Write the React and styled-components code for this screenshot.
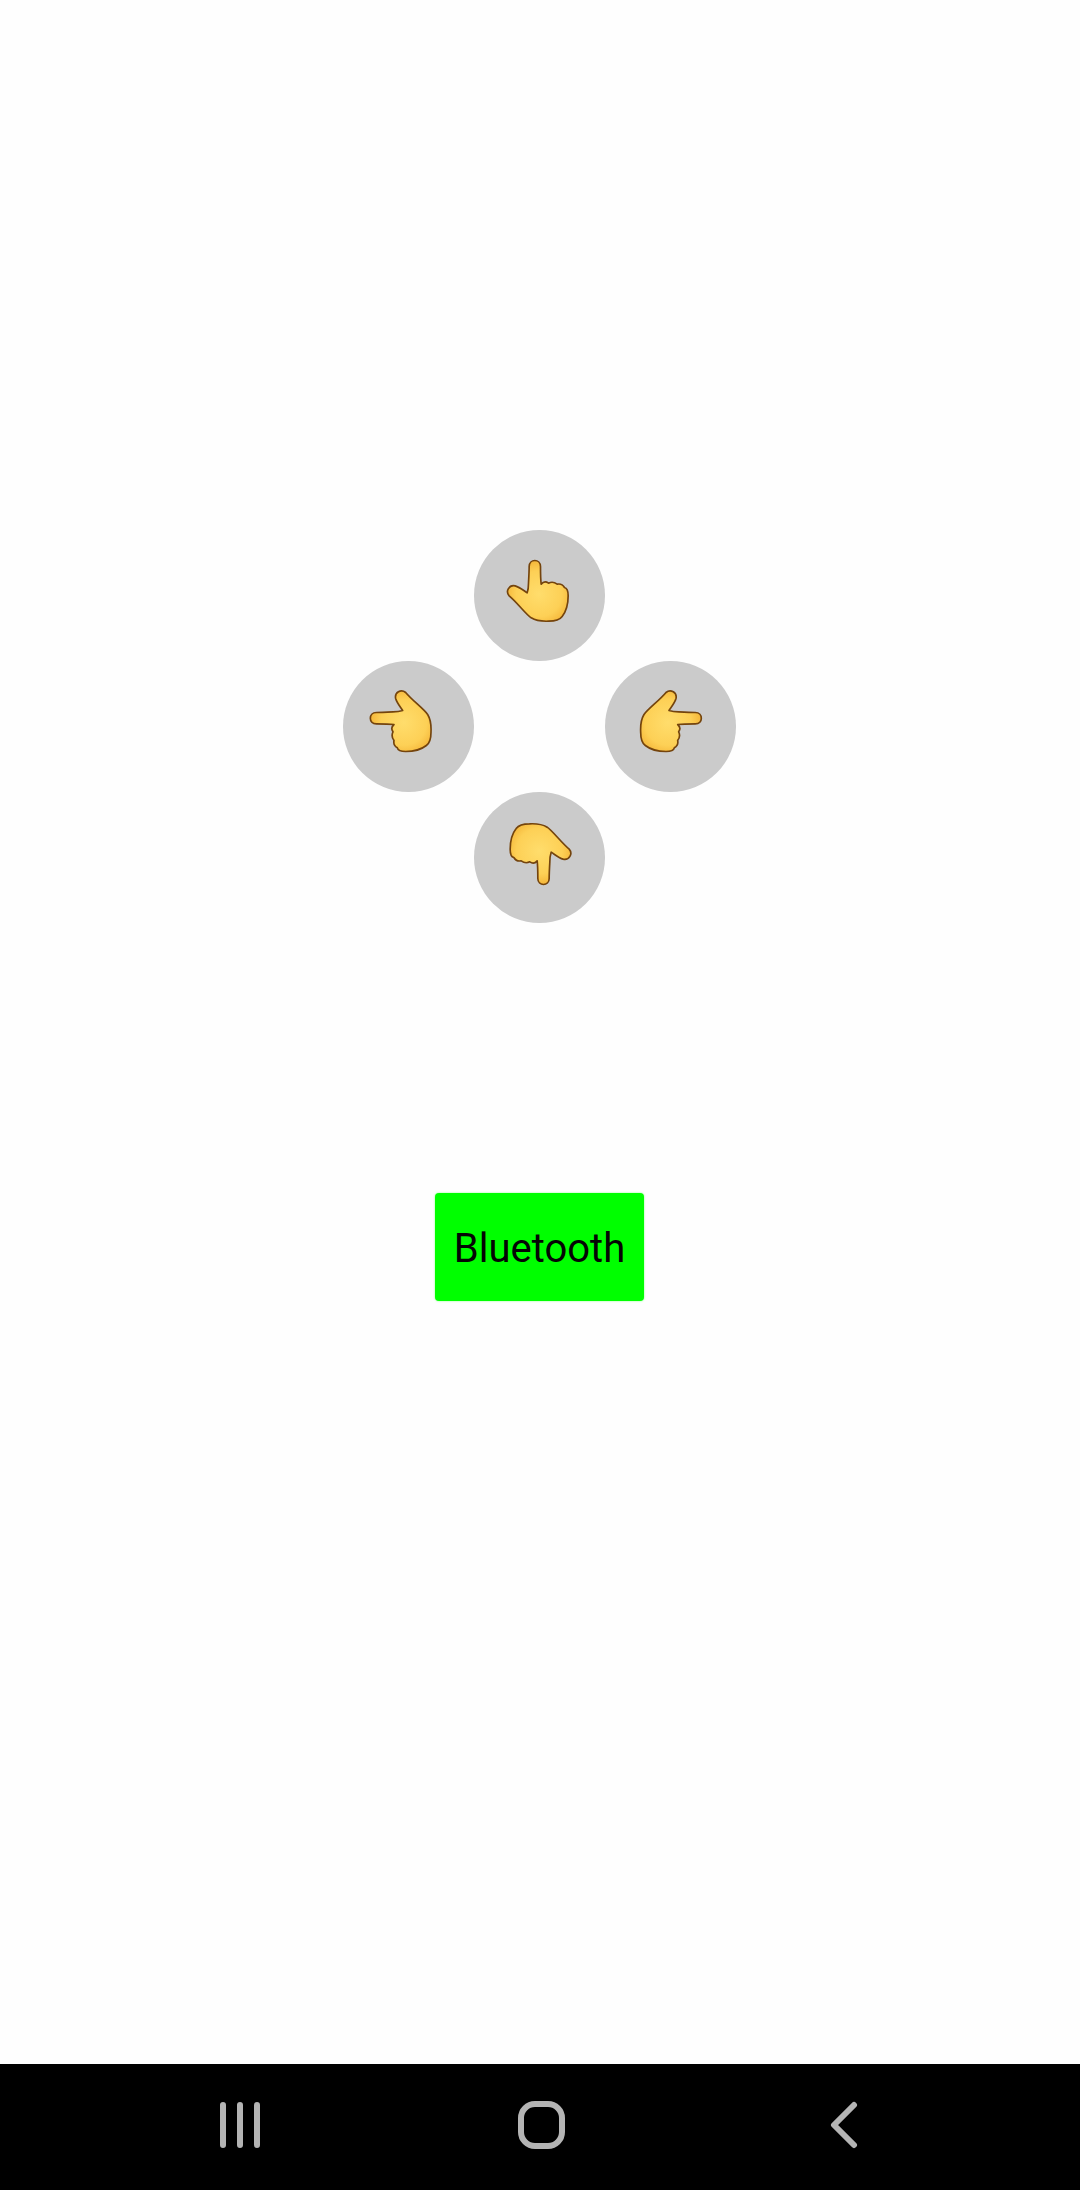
import React from 'react';
import styled, { createGlobalStyle } from 'styled-components';

const GlobalStyle = createGlobalStyle`
  * { box-sizing: border-box; }
  html, body { margin: 0; background: #fff; }
  body { font-family: Roboto, 'Liberation Sans', sans-serif; }
`;

const Screen = styled.div`
  width: 1080px;
  height: 2190px;
  display: flex;
  flex-direction: column;
  background: #fefefe;
`;
const Content = styled.main`
  flex: 1;
  display: flex;
  flex-direction: column;
  align-items: center;
  padding: 530px 1px 0 0;
`;
const Pad = styled.div`
  display: grid;
  grid-template-columns: repeat(3, 131px);
  grid-template-rows: repeat(3, 131px);
  grid-template-areas:
    '. up .'
    'left . right'
    '. down .';
`;
const PadButton = styled.button`
  grid-area: ${p => p.$dir};
  display: flex;
  align-items: center;
  justify-content: center;
  padding: 0;
  border: none;
  border-radius: 50%;
  background: #cbcbcb;
`;
const HandIcon = styled.svg`
  filter: blur(0.35px);
`;
const ConnectButton = styled.button`
  width: 209px;
  height: 108px;
  margin-top: 270px;
  padding: 2px 0 0;
  border: none;
  border-radius: 4px;
  background: #00ff00;
  box-shadow: 0 0 2px #7dff7d;
  color: #050505;
  font-family: Roboto, 'Liberation Sans', sans-serif;
  font-size: 40px;
`;
const NavBar = styled.nav`
  height: 126px;
  flex: none;
  display: grid;
  grid-template-columns: repeat(3, 302px);
  justify-content: center;
  align-items: center;
  padding: 0 0 4px 4px;
  background: #000;
`;
const NavIcon = styled.svg`
  justify-self: center;
  fill: none;
  stroke: #b4b4b4;
  stroke-linecap: round;
  stroke-linejoin: round;
`;

const HAND = 'M146 78 C146 54 180 54 180 78 C180 98 180 114 182 131 C188 124 197 123 204 128 C212 124 222 125 230 131 C240 129 248 134 252 141 C260 143 263 152 263 166 C263 192 256 214 245 228 C236 240 224 242 205 242 C184 243 165 240 152 232 C135 220 110 186 86 166 C74 152 86 132 104 136 C118 140 129 150 140 157 C143 148 144 140 144 128 C145 110 146 92 146 78 Z';

const transforms = {
  up: 'matrix(1 0 0 1 1.5 13.5)',
  left: 'matrix(0 1 1 0 4 -9.5)',
  right: 'matrix(0 1 -1 0 331 -9.5)',
  down: 'matrix(-1 0 0 -1 353.5 319.5)',
};

function Hand({ dir }) {
  const id = `skin-${dir}`;
  return (
    <HandIcon width="120" height="120" viewBox="0 0 360 360">
      <defs>
        <radialGradient id={id} cx="52%" cy="55%" r="58%">
          <stop offset="0%" stopColor="#ffdd6c" />
          <stop offset="65%" stopColor="#fdd056" />
          <stop offset="100%" stopColor="#f3b234" />
        </radialGradient>
      </defs>
      <path d={HAND} transform={transforms[dir]} fill={`url(#${id})`} stroke="#74440d" strokeWidth="5" strokeLinejoin="round" />
    </HandIcon>
  );
}

export default function App() {
  return (
    <Screen>
      <GlobalStyle />
      <Content>
        <Pad>
          {['up', 'left', 'right', 'down'].map(dir => (
            <PadButton key={dir} $dir={dir} aria-label={dir}>
              <Hand dir={dir} />
            </PadButton>
          ))}
        </Pad>
        <ConnectButton>Bluetooth</ConnectButton>
      </Content>
      <NavBar>
        <NavIcon width="46" height="48" viewBox="0 0 46 48" strokeWidth="6">
          <path d="M6 4V44M23 4V44M40 4V44" />
        </NavIcon>
        <NavIcon width="48" height="48" viewBox="0 0 48 48" strokeWidth="6">
          <rect x="3" y="3" width="41" height="42" rx="14" />
        </NavIcon>
        <NavIcon width="30" height="48" viewBox="0 0 30 48" strokeWidth="6">
          <path d="M25 4L5 24L25 44" />
        </NavIcon>
      </NavBar>
    </Screen>
  );
}
